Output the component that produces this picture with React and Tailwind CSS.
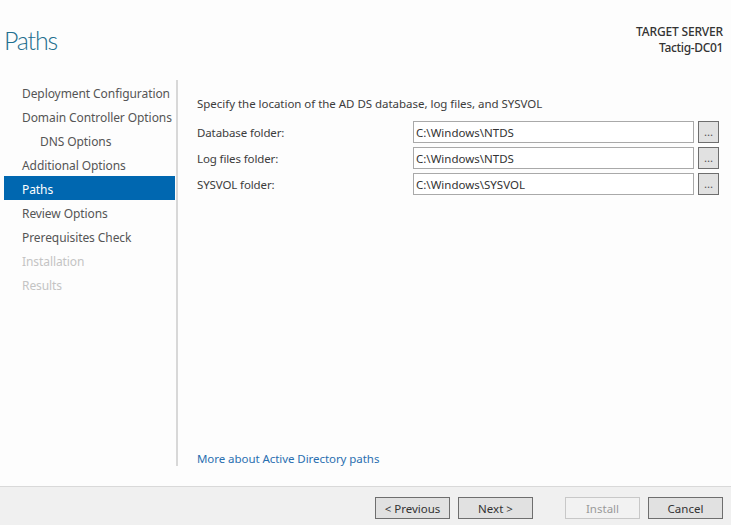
import React from 'react';

const steps = [
  { label: 'Deployment Configuration' },
  { label: 'Domain Controller Options' },
  { label: 'DNS Options', sub: true },
  { label: 'Additional Options' },
  { label: 'Paths', active: true },
  { label: 'Review Options' },
  { label: 'Prerequisites Check' },
  { label: 'Installation', disabled: true },
  { label: 'Results', disabled: true },
];

const folders = [
  { label: 'Database folder:', value: 'C:\\Windows\\NTDS' },
  { label: 'Log files folder:', value: 'C:\\Windows\\NTDS' },
  { label: 'SYSVOL folder:', value: 'C:\\Windows\\SYSVOL' },
];

const StepItem = ({ step }) => {
  let color = 'text-[#555555]';
  if (step.active) color = 'bg-[#0067b0] text-white';
  if (step.disabled) color = 'text-[#c4c4c4]';
  return (
    <div className={`h-6 pt-1 flex items-center whitespace-nowrap tracking-[-0.08px] ${step.sub ? 'pl-9' : 'pl-[18px]'} ${color}`}>
      {step.label}
    </div>
  );
};

const FooterButton = ({ children, disabled, className = '' }) => (
  <button
    className={`w-[75px] h-[22px] border text-center text-[11.5px] leading-[21px] ${
      disabled
        ? 'border-[#c8c8c8] bg-[#f2f2f2] text-[#9a9a9a]'
        : 'border-[#6e6e6e] bg-[#e1e1e1] text-[#333333]'
    } ${className}`}
  >
    {children}
  </button>
);

export default function App() {
  return (
    <div className="w-[731px] h-[525px] flex flex-col bg-[#fdfdfd] font-['Noto_Sans','Open_Sans',sans-serif] text-[12px] text-[#3c3c3c] overflow-hidden">
      <div className="h-[80px] flex justify-between items-start shrink-0">
        <h1 className="mt-[22px] ml-1 font-['Lato',sans-serif] text-[25px] leading-[36px] font-light tracking-[-1.2px] text-[#1f6f8f]">Paths</h1>
        <div className="mt-[24px] mr-2 text-right font-medium leading-[16px] tracking-[-0.17px] text-[#333333]">
          <div>TARGET SERVER</div>
          <div className="tracking-[-0.35px]">Tactig-DC01</div>
        </div>
      </div>

      <div className="flex h-[386px] shrink-0">
        <div className="w-[171px] ml-1 shrink-0">
          {steps.map((step, index) => (
            <StepItem key={index} step={step} />
          ))}
        </div>
        <div className="w-0.5 ml-px bg-[#d8d8d8] shrink-0"></div>
        <div className="flex-1 pl-[19px] pr-3 flex flex-col text-[11.5px]">
          <div className="mt-[15px] h-[18px] leading-[18px] tracking-[-0.03px]">Specify the location of the AD DS database, log files, and SYSVOL</div>
          <div className="mt-2 flex flex-col gap-1">
            {folders.map((folder, index) => (
              <div key={index} className="flex items-center h-[22px]">
                <div className="w-[216px] shrink-0 pt-0.5 tracking-[-0.12px]">{folder.label}</div>
                <div className="w-[281px] h-[22px] shrink-0 border border-[#a9a9a9] bg-white pl-0.5 leading-[21px] text-[#333333]">{folder.value}</div>
                <button className="w-[21px] h-[22px] ml-1 border border-[#6e6e6e] bg-[#e1e1e1] text-[#555555] leading-[20px]">...</button>
              </div>
            ))}
          </div>
          <a className="mt-auto mb-[-2px] h-[18px] leading-[18px] tracking-[-0.06px] text-[#2a6fb0]">More about Active Directory paths</a>
        </div>
      </div>

      <div className="mt-5 flex-1 bg-[#f0f0f0] border-t border-[#d9d9d9] flex items-center justify-end pr-2 pt-[3px]">
        <FooterButton>&lt; Previous</FooterButton>
        <FooterButton className="ml-2">Next &gt;</FooterButton>
        <FooterButton disabled className="ml-8">Install</FooterButton>
        <FooterButton className="ml-2">Cancel</FooterButton>
      </div>
    </div>
  );
}
